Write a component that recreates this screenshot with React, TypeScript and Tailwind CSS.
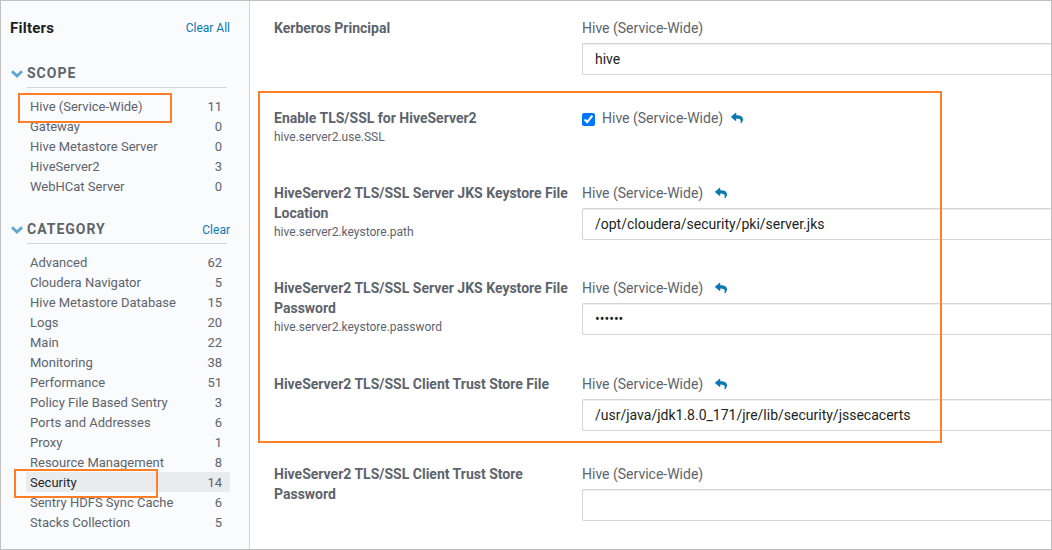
import React from "react";
import { FaReply } from "react-icons/fa";

type Item = { name: string; count: number; active?: boolean };

const scopes: Item[] = [
  { name: "Hive (Service-Wide)", count: 11 },
  { name: "Gateway", count: 0 },
  { name: "Hive Metastore Server", count: 0 },
  { name: "HiveServer2", count: 3 },
  { name: "WebHCat Server", count: 0 },
];

const categories: Item[] = [
  { name: "Advanced", count: 62 },
  { name: "Cloudera Navigator", count: 5 },
  { name: "Hive Metastore Database", count: 15 },
  { name: "Logs", count: 20 },
  { name: "Main", count: 22 },
  { name: "Monitoring", count: 38 },
  { name: "Performance", count: 51 },
  { name: "Policy File Based Sentry", count: 3 },
  { name: "Ports and Addresses", count: 6 },
  { name: "Proxy", count: 1 },
  { name: "Resource Management", count: 8 },
  { name: "Security", count: 14, active: true },
  { name: "Sentry HDFS Sync Cache", count: 6 },
  { name: "Stacks Collection", count: 5 },
];

function Chevron() {
  return (
    <svg viewBox="0 0 12 8" className="ml-[1px] mr-[4px] mt-[2px] h-2 w-3 shrink-0" fill="none">
      <path d="M1 1.3 L6 6 L11 1.3" stroke="#5ba9d0" strokeWidth="2.9" />
    </svg>
  );
}

function FilterGroup({ title, items, clearable }: { title: string; items: Item[]; clearable?: boolean }) {
  return (
    <section>
      <div className="flex h-5 items-center">
        <Chevron />
        <h2 className="text-[14px] font-bold tracking-[1px]">{title}</h2>
        {clearable && <a className="ml-auto pt-[2px] text-[12px] text-[#0b78b0]">Clear</a>}
      </div>
      <div className="ml-[17px] mr-[3px] mt-1 h-px bg-[#d3d6d9]" />
      <ul className="ml-4 mt-2">
        {items.map((item) => (
          <li
            key={item.name}
            className={`flex h-5 items-center justify-between pl-1 pr-2 pt-[2px] text-[13px] ${item.active ? "bg-[#e9ebec]" : ""}`}
          >
            <span className={item.active ? "text-[#22272b]" : ""}>{item.name}</span>
            <span>{item.count}</span>
          </li>
        ))}
      </ul>
    </section>
  );
}

type FieldProps = {
  label: string;
  prop?: string;
  value?: string;
  type?: string;
  height: string;
  undo?: boolean;
};

function Field({ label, prop, value = "", type = "text", height, undo }: FieldProps) {
  const checkbox = type === "checkbox";
  return (
    <div className={`flex shrink-0 ${height}`}>
      <div className="w-[308px] shrink-0">
        <div className="w-[300px] text-[14px] font-bold leading-5">{label}</div>
        {prop && <div className="text-[12px] leading-[18px]">{prop}</div>}
      </div>
      <div className="min-w-0 flex-1">
        <div className="flex h-5 items-center text-[14px]">
          {checkbox && <input type="checkbox" defaultChecked className="mr-[7px] mt-[3px] size-[13px]" />}
          <span>Hive (Service-Wide)</span>
          {undo && (
            <FaReply className={`mb-[1px] size-3 text-[#0b78b0] ${checkbox ? "ml-2" : "ml-3"}`} />
          )}
        </div>
        {!checkbox && (
          <input
            type={type}
            defaultValue={value}
            className="mt-[5px] block h-8 w-full rounded-l-[2px] border border-r-0 border-[#d3d5d8] bg-white px-3 text-[14px] text-[#1b1f23] shadow-[inset_0_1px_0_#eeeeee] outline-none"
          />
        )}
      </div>
    </div>
  );
}

export default function App() {
  return (
    <div className="relative flex h-[550px] w-[1052px] overflow-hidden border border-[#c0c0c0] bg-white font-[Roboto,sans-serif] text-[#5d646c]">
      <aside className="flex w-[249px] shrink-0 flex-col border-r border-[#d2d4d8] bg-[#fafbfd] pl-[9px] pr-[19px] pt-[17px]">
        <div className="mb-[25px] flex h-5 items-center justify-between">
          <h1 className="text-[15px] font-bold tracking-[0.25px] text-[#1b1f23]">Filters</h1>
          <a className="text-[12px] text-[#0b78b0]">Clear All</a>
        </div>
        <FilterGroup title="SCOPE" items={scopes} />
        <div className="h-[23px] shrink-0" />
        <FilterGroup title="CATEGORY" items={categories} clearable />
      </aside>

      <main className="flex min-w-0 flex-1 flex-col pl-6 pt-[17px]">
        <Field label="Kerberos Principal" value="hive" height="h-[90px]" />
        <Field label="Enable TLS/SSL for HiveServer2" prop="hive.server2.use.SSL" type="checkbox" height="h-[75px]" undo />
        <Field
          label="HiveServer2 TLS/SSL Server JKS Keystore File Location"
          prop="hive.server2.keystore.path"
          value="/opt/cloudera/security/pki/server.jks"
          height="h-[95px]"
          undo
        />
        <Field
          label="HiveServer2 TLS/SSL Server JKS Keystore File Password"
          prop="hive.server2.keystore.password"
          value="secret"
          type="password"
          height="h-[96px]"
          undo
        />
        <Field
          label="HiveServer2 TLS/SSL Client Trust Store File"
          value="/usr/java/jdk1.8.0_171/jre/lib/security/jssecacerts"
          height="h-[90px]"
          undo
        />
        <Field label="HiveServer2 TLS/SSL Client Trust Store Password" height="h-[57px]" />
      </main>

      <div className="pointer-events-none absolute left-[17px] top-[92px] h-[30px] w-[154px] border-2 border-[#ff7f27]" />
      <div className="pointer-events-none absolute left-[13px] top-[468px] h-[29px] w-[144px] border-2 border-[#ff7f27]" />
      <div className="pointer-events-none absolute left-[257px] top-[90px] h-[352px] w-[684px] border-2 border-[#ff7f27]" />
    </div>
  );
}
